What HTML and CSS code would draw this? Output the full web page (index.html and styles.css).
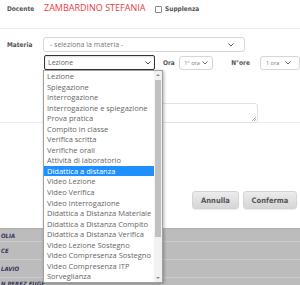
FILE: index.html
```html
<!DOCTYPE html>
<html lang="it">
<head>
    <meta charset="UTF-8">
    <title>Registro - Lezione</title>
    <link rel="stylesheet" href="styles.css">
</head>
<body>
    <div class="modal">
        <div class="row head-row">
            <span class="label">Docente</span>
            <span class="teacher">ZAMBARDINO STEFANIA</span>
            <span class="check"><span class="box"></span>Supplenza</span>
        </div>

        <div class="form">
            <div class="row materia-row">
                <span class="label">Materia</span>
                <div class="select select-materia">
                    <span>- seleziona la materia -</span>
                    <svg class="chev" width="6" height="4" viewBox="0 0 6 4"><polyline points="0.5,0.5 3,3 5.5,0.5" fill="none" stroke="#666" stroke-width="1"/></svg>
                </div>
            </div>
            <div class="row tipo-row">
                <div class="select select-tipo">
                    <span>Lezione</span>
                    <svg class="chev" width="6" height="4" viewBox="0 0 6 4"><polyline points="0.5,0.5 3,3 5.5,0.5" fill="none" stroke="#444" stroke-width="1"/></svg>
                </div>
                <span class="label small-label">Ora</span>
                <div class="select select-ora">
                    <span>1° ora</span>
                    <svg class="chev" width="6" height="4" viewBox="0 0 6 4"><polyline points="0.5,0.5 3,3 5.5,0.5" fill="none" stroke="#666" stroke-width="1"/></svg>
                </div>
                <span class="label nore-label">N°ore</span>
                <div class="select select-nore">
                    <span>1 ora</span>
                    <svg class="chev" width="6" height="4" viewBox="0 0 6 4"><polyline points="0.5,0.5 3,3 5.5,0.5" fill="none" stroke="#666" stroke-width="1"/></svg>
                </div>
            </div>
            <div class="textarea"><span class="grip"></span></div>
        </div>

        <div class="actions">
            <button class="btn">Annulla</button>
            <button class="btn">Conferma</button>
        </div>
    </div>

    <div class="table">
        <div class="trow">OLIA</div>
        <div class="trow">CE</div>
        <div class="trow">LAVIO</div>
        <div class="trow">N PEREZ EUGE</div>
    </div>

    <div class="dropdown">
        <ul class="options">
            <li>Lezione</li>
            <li>Spiegazione</li>
            <li>Interrogazione</li>
            <li>Interrogazione e spiegazione</li>
            <li>Prova pratica</li>
            <li>Compito in classe</li>
            <li>Verifica scritta</li>
            <li>Verifiche orali</li>
            <li>Attività di laboratorio</li>
            <li class="active">Didattica a distanza</li>
            <li>Video Lezione</li>
            <li>Video Verifica</li>
            <li>Video Interrogazione</li>
            <li>Didattica a Distanza Materiale</li>
            <li>Didattica a Distanza Compito</li>
            <li>Didattica a Distanza Verifica</li>
            <li>Video Lezione Sostegno</li>
            <li>Video Compresenza Sostegno</li>
            <li>Video Compresenza ITP</li>
            <li>Sorveglianza</li>
        </ul>
        <div class="scrollbar">
            <span class="arrow up"></span>
            <span class="thumb"></span>
            <span class="arrow down"></span>
        </div>
    </div>
</body>
</html>
```
FILE: styles.css
```css
body {
    margin: 0;
    width: 300px;
    height: 285px;
    overflow: hidden;
    position: relative;
    font-family: "Open Sans", sans-serif;
    background-color: #fff;
    color: #555;
}

.modal {
    height: 228px;
    background-color: #fff;
}

.row {
    display: flex;
    align-items: center;
    white-space: nowrap;
}

.label {
    font-family: "DejaVu Sans Condensed", "DejaVu Sans", sans-serif;
    font-weight: bold;
    font-size: 6.5px;
    color: #555;
}

.head-row {
    height: 29px;
    padding-left: 7px;
    align-items: flex-start;
    padding-top: 1px;
    box-sizing: border-box;
    border-bottom: 1px solid #ececec;
}

.head-row .label {
    width: 37px;
    flex-shrink: 0;
    margin-top: 4px;
}

.teacher {
    color: #ec3b46;
    font-size: 9px;
    width: 111px;
    flex-shrink: 0;
    white-space: nowrap;
}

.check {
    display: flex;
    align-items: center;
    margin-top: 4px;
    font-family: "DejaVu Sans Condensed", "DejaVu Sans", sans-serif;
    font-weight: bold;
    font-size: 6.5px;
    color: #555;
}

.check .box {
    width: 5px;
    height: 5px;
    border: 1px solid #888;
    border-radius: 1px;
    margin-right: 3px;
}

.form {
    padding: 8px 0 0 0;
    height: 94px;
    box-sizing: border-box;
    border-bottom: 1px solid #ececec;
}

.materia-row {
    padding-left: 7px;
}

.materia-row .label {
    width: 36px;
}

.select {
    box-sizing: border-box;
    display: flex;
    flex-shrink: 0;
    align-items: center;
    justify-content: space-between;
    border: 1px solid #d6d6d6;
    border-radius: 3px;
    font-size: 7px;
    color: #777;
    padding: 0 5px 0 4px;
    background-color: #fff;
    white-space: nowrap;
}

.select-materia {
    width: 202px;
    height: 15px;
    padding-left: 6px;
    padding-right: 10px;
}

.tipo-row {
    margin-top: 3px;
    padding-left: 44px;
}

.select-tipo {
    width: 111px;
    height: 15px;
    border: 1px solid #333;
    border-radius: 2px;
    color: #666;
    padding: 0 3px 0 3px;
    box-shadow: inset 0 1px 2px rgba(0, 0, 0, 0.15);
}

.small-label {
    margin-left: 8px;
    width: 18px;
}

.select-ora {
    width: 34px;
    height: 14px;
    font-size: 5.5px;
    padding: 0 4px 0 4px;
}

.nore-label {
    margin-left: 18px;
    width: 32px;
}

.select-nore {
    width: 40px;
    height: 14px;
    font-size: 5.5px;
    padding: 0 8px 0 5px;
}

.textarea {
    position: relative;
    margin: 33px 0 0 44px;
    width: 214px;
    height: 20px;
    box-sizing: border-box;
    border: 1px solid #e2e2e2;
    border-radius: 3px;
}

.grip {
    position: absolute;
    right: 1px;
    bottom: 1px;
    width: 4px;
    height: 4px;
    background: linear-gradient(135deg, transparent 50%, #aaa 50%, #aaa 60%, transparent 60%, transparent 75%, #aaa 75%, #aaa 85%, transparent 85%);
}

.actions {
    display: flex;
    justify-content: flex-end;
    gap: 4px;
    padding: 68px 3px 0 0;
}

.btn {
    height: 18px;
    padding: 0 6px;
    border: 1px solid #d4d4d4;
    border-radius: 3px;
    background: linear-gradient(#ececec, #d6d6d6);
    font-family: "DejaVu Sans Condensed", "DejaVu Sans", sans-serif;
    font-weight: bold;
    font-size: 7.5px;
    color: #555;
    box-shadow: 0 1px 1px rgba(0, 0, 0, 0.08);
}

.btn:first-child {
    width: 47px;
}

.btn:last-child {
    width: 54px;
}

.table {
    height: 57px;
    background-color: #bcbcbc;
    border-top: 1px solid #b0b0b0;
}

.trow {
    height: 17px;
    border-bottom: 1px solid #cacaca;
    font-family: "DejaVu Sans Condensed", "DejaVu Sans", sans-serif;
    font-weight: bold;
    font-style: italic;
    font-size: 6px;
    color: #35355e;
    display: flex;
    align-items: center;
    padding-left: 1px;
}

.trow:first-child {
    height: 12px;
}

.trow:last-child {
    height: 9px;
    border-bottom: none;
    align-items: flex-end;
}

.dropdown {
    position: absolute;
    left: 43px;
    top: 70px;
    width: 120px;
    height: 213px;
    box-sizing: border-box;
    border: 1px solid #a0a0a0;
    background-color: #fff;
    display: flex;
    box-shadow: 1px 1px 3px rgba(0, 0, 0, 0.3);
}

.options {
    list-style: none;
    margin: 0;
    padding: 0;
    flex: 1;
    min-width: 0;
}

.options li {
    height: 10.55px;
    line-height: 10.55px;
    padding-left: 3px;
    font-size: 7.5px;
    color: #666;
    white-space: nowrap;
    overflow: hidden;
}

.options li.active {
    background-color: #1e8fff;
    color: #fff;
}

.scrollbar {
    width: 8px;
    flex-shrink: 0;
    background-color: #f1f1f1;
    display: flex;
    flex-direction: column;
    align-items: center;
}

.arrow {
    width: 0;
    height: 0;
    border-left: 2px solid transparent;
    border-right: 2px solid transparent;
}

.arrow.up {
    margin-top: 3px;
    border-bottom: 2px solid #888;
}

.arrow.down {
    margin-top: auto;
    margin-bottom: 3px;
    border-top: 2px solid #888;
}

.thumb {
    width: 6px;
    height: 157px;
    margin-top: 4px;
    background-color: #c1c1c1;
}
```
